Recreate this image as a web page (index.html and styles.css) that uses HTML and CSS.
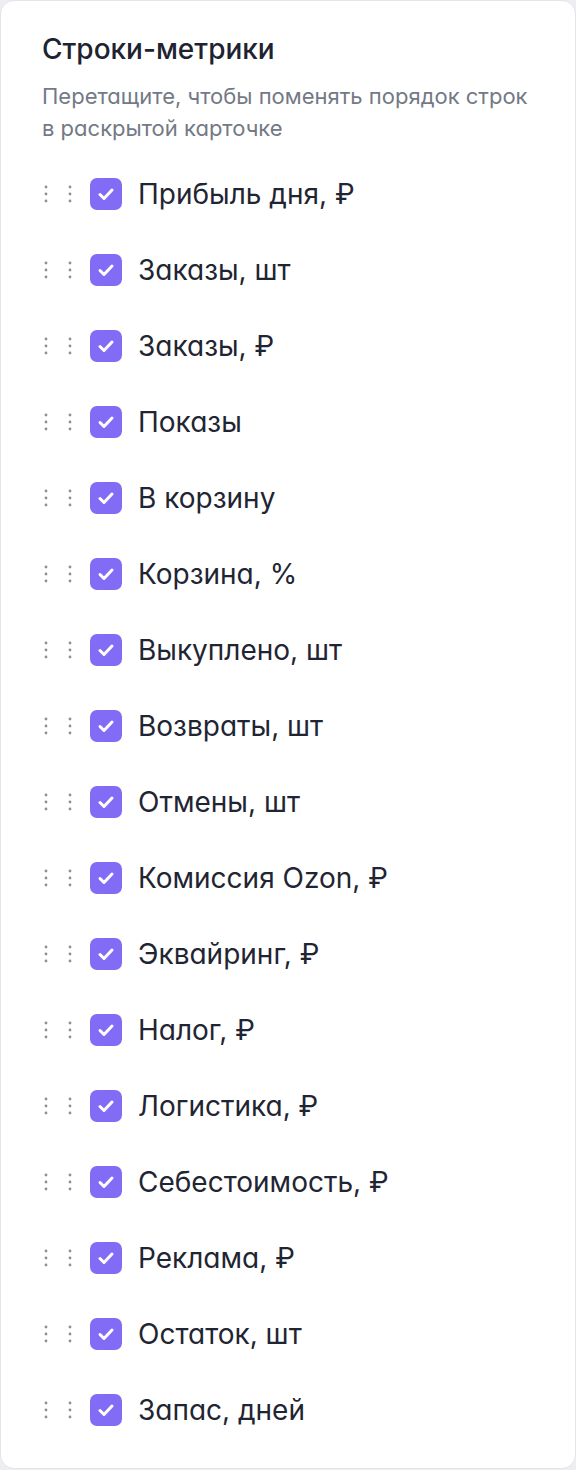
FILE: index.html
```html
<!DOCTYPE html>
<html lang="ru">
<head>
<meta charset="utf-8">
<link rel="stylesheet" href="styles.css">
</head>
<body>
<div class="card">
  <h2 class="title">Строки-метрики</h2>
  <p class="subtitle">Перетащите, чтобы поменять порядок строк в раскрытой карточке</p>
  <ul class="list" id="list"></ul>
</div>
<script src="app.js"></script>
</body>
</html>
```
FILE: app.js
```js
const items = ["Прибыль дня, ₽","Заказы, шт","Заказы, ₽","Показы","В корзину","Корзина, %","Выкуплено, шт","Возвраты, шт","Отмены, шт","Комиссия Ozon, ₽","Эквайринг, ₽","Налог, ₽","Логистика, ₽","Себестоимость, ₽","Реклама, ₽","Остаток, шт","Запас, дней"];
const list = document.getElementById('list');
const handle = '<svg class="handle" width="36" height="20" viewBox="0 0 36 20"><g fill="#8a8f98"><circle cx="6" cy="3" r="1.4"/><circle cx="6" cy="10" r="1.4"/><circle cx="6" cy="17" r="1.4"/><circle cx="30" cy="3" r="1.4"/><circle cx="30" cy="10" r="1.4"/><circle cx="30" cy="17" r="1.4"/></g></svg>';
const check = '<span class="check"><svg width="32" height="32" viewBox="0 0 32 32"><path d="M10 16.5l4 4 8-8.5" fill="none" stroke="#fff" stroke-width="3" stroke-linecap="round" stroke-linejoin="round"/></svg></span>';
list.innerHTML = items.map(t => `<li class="row">${handle}${check}<span class="label">${t}</span></li>`).join('');
```
FILE: styles.css
```css
html, body {
  margin: 0;
  padding: 0;
  background: #eceef1;
}
body {
  font-family: Inter, "Noto Sans", sans-serif;
  font-feature-settings: "cv11" 1;
}
.card {
  box-sizing: border-box;
  width: 576px;
  height: 1469px;
  background: #fff;
  border: 1px solid #e3e5e8;
  border-radius: 14px;
  padding: 32px 40px 20px 41px;
}
.title {
  margin: 0;
  font-size: 28px;
  line-height: 32px;
  font-weight: 500;
  color: #1d2330;
}
.subtitle {
  margin: 15px 0 0;
  font-size: 22px;
  line-height: 32px;
  color: #737985;
  font-weight: 400;
}
.list {
  list-style: none;
  margin: 12px 0 0;
  padding: 0;
}
.row {
  display: flex;
  align-items: center;
  height: 76px;
}
.handle {
  flex: none;
  margin-left: -2px;
}
.check {
  flex: none;
  width: 32px;
  height: 32px;
  border-radius: 7px;
  background: #836cf5;
  margin-left: 14px;
  display: block;
}
.check svg { display: block; }
.label {
  margin-left: 16px;
  font-size: 28px;
  color: #1f2532;
}
```
